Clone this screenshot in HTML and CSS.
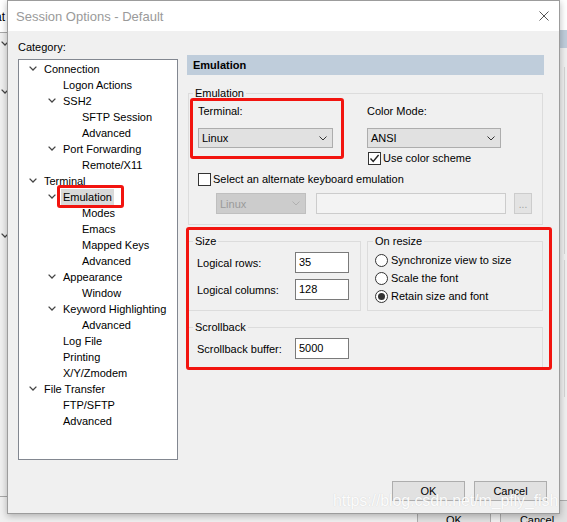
FILE: index.html
```html
<!DOCTYPE html>
<html>
<head>
<meta charset="utf-8">
<title>Session Options - Default</title>
<link rel="stylesheet" href="styles.css">
</head>
<body>
<div class="desk">
  <div class="bg-win">
    <div class="bg-title"><span class="bg-title-text">at</span></div>
    <div class="bg-band"></div>
    <svg class="bg-chev c1" viewBox="0 0 8 5"><path d="M0.6 0.6 L4 4 L7.4 0.6"/></svg>
    <svg class="bg-chev c2" viewBox="0 0 8 5"><path d="M0.6 0.6 L4 4 L7.4 0.6"/></svg>
    <svg class="bg-chev c3" viewBox="0 0 8 5"><path d="M0.6 0.6 L4 4 L7.4 0.6"/></svg>
    <div class="bg-vline v1"></div>
    <div class="bg-vline v2"></div>
    <div class="bg-hline"></div>
    <div class="bg-btn b1">OK</div>
    <div class="bg-btn b2">Cancel</div>
  </div>

  <div class="dialog">
    <div class="titlebar">
      <span class="title">Session Options - Default</span>
      <svg class="close" viewBox="0 0 10 10"><path d="M0.5 0.5 L9.5 9.5 M9.5 0.5 L0.5 9.5"/></svg>
    </div>
    <div class="dlg-body">
      <div class="main">
        <div class="cat">
          <div class="cat-label">Category:</div>
          <div class="tree">
            <div class="row l0"><span class="tw"><svg viewBox="0 0 8 5"><path d="M0.6 0.6 L4 4 L7.4 0.6"/></svg></span><span class="lbl">Connection</span></div>
            <div class="row l1"><span class="tw"></span><span class="lbl">Logon Actions</span></div>
            <div class="row l1"><span class="tw"><svg viewBox="0 0 8 5"><path d="M0.6 0.6 L4 4 L7.4 0.6"/></svg></span><span class="lbl">SSH2</span></div>
            <div class="row l2"><span class="tw"></span><span class="lbl">SFTP Session</span></div>
            <div class="row l2"><span class="tw"></span><span class="lbl">Advanced</span></div>
            <div class="row l1"><span class="tw"><svg viewBox="0 0 8 5"><path d="M0.6 0.6 L4 4 L7.4 0.6"/></svg></span><span class="lbl">Port Forwarding</span></div>
            <div class="row l2"><span class="tw"></span><span class="lbl">Remote/X11</span></div>
            <div class="row l0"><span class="tw"><svg viewBox="0 0 8 5"><path d="M0.6 0.6 L4 4 L7.4 0.6"/></svg></span><span class="lbl">Terminal</span></div>
            <div class="row l1"><span class="tw"><svg viewBox="0 0 8 5"><path d="M0.6 0.6 L4 4 L7.4 0.6"/></svg></span><span class="lbl sel">Emulation</span></div>
            <div class="row l2"><span class="tw"></span><span class="lbl">Modes</span></div>
            <div class="row l2"><span class="tw"></span><span class="lbl">Emacs</span></div>
            <div class="row l2"><span class="tw"></span><span class="lbl">Mapped Keys</span></div>
            <div class="row l2"><span class="tw"></span><span class="lbl">Advanced</span></div>
            <div class="row l1"><span class="tw"><svg viewBox="0 0 8 5"><path d="M0.6 0.6 L4 4 L7.4 0.6"/></svg></span><span class="lbl">Appearance</span></div>
            <div class="row l2"><span class="tw"></span><span class="lbl">Window</span></div>
            <div class="row l1"><span class="tw"><svg viewBox="0 0 8 5"><path d="M0.6 0.6 L4 4 L7.4 0.6"/></svg></span><span class="lbl">Keyword Highlighting</span></div>
            <div class="row l2"><span class="tw"></span><span class="lbl">Advanced</span></div>
            <div class="row l1"><span class="tw"></span><span class="lbl">Log File</span></div>
            <div class="row l1"><span class="tw"></span><span class="lbl">Printing</span></div>
            <div class="row l1"><span class="tw"></span><span class="lbl">X/Y/Zmodem</span></div>
            <div class="row l0"><span class="tw"><svg viewBox="0 0 8 5"><path d="M0.6 0.6 L4 4 L7.4 0.6"/></svg></span><span class="lbl">File Transfer</span></div>
            <div class="row l1"><span class="tw"></span><span class="lbl">FTP/SFTP</span></div>
            <div class="row l1"><span class="tw"></span><span class="lbl">Advanced</span></div>
          </div>
        </div>

        <div class="panel">
          <div class="phead">Emulation</div>

          <fieldset class="emu">
            <legend>Emulation</legend>
            <div class="emu-top">
              <div class="col term">
                <div class="flabel">Terminal:</div>
                <div class="select"><span>Linux</span><svg viewBox="0 0 8 5"><path d="M0.5 0.5 L4 4 L7.5 0.5"/></svg></div>
              </div>
              <div class="col cmode">
                <div class="flabel">Color Mode:</div>
                <div class="select"><span>ANSI</span><svg viewBox="0 0 8 5"><path d="M0.5 0.5 L4 4 L7.5 0.5"/></svg></div>
                <div class="check-row ucs"><span class="cbox"><svg viewBox="0 0 11 11"><path d="M1.5 5.5 L4.2 8.4 L9.6 2"/></svg></span><span>Use color scheme</span></div>
              </div>
            </div>
            <div class="check-row alt"><span class="cbox"></span><span>Select an alternate keyboard emulation</span></div>
            <div class="alt-row">
              <div class="select dis"><span>Linux</span><svg viewBox="0 0 8 5"><path d="M0.5 0.5 L4 4 L7.5 0.5"/></svg></div>
              <div class="tinput dis"></div>
              <div class="dots">...</div>
            </div>
          </fieldset>

          <div class="lower">
            <div class="lower-row">
              <fieldset class="size">
                <legend>Size</legend>
                <div class="frow"><span class="flab">Logical rows:</span><span class="num">35</span></div>
                <div class="frow"><span class="flab">Logical columns:</span><span class="num">128</span></div>
              </fieldset>
              <fieldset class="resize">
                <legend>On resize</legend>
                <div class="radio-row"><span class="rad"></span><span>Synchronize view to size</span></div>
                <div class="radio-row"><span class="rad"></span><span>Scale the font</span></div>
                <div class="radio-row"><span class="rad on"></span><span>Retain size and font</span></div>
              </fieldset>
            </div>
            <fieldset class="scroll">
              <legend>Scrollback</legend>
              <div class="frow"><span class="flab">Scrollback buffer:</span><span class="num">5000</span></div>
            </fieldset>
          </div>
        </div>
      </div>

      <div class="footer">
        <div class="btn">OK</div>
        <div class="btn">Cancel</div>
      </div>
    </div>
  </div>

  <div class="watermark">https://blog.csdn.net/m_pfly_fish</div>
</div>
</body>
</html>
```

FILE: styles.css
```css
* { box-sizing: border-box; }
html, body { margin: 0; padding: 0; }
body {
  width: 567px;
  height: 522px;
  overflow: hidden;
  font-family: "Liberation Sans", Arial, sans-serif;
  font-size: 11px;
  color: #000;
  background: #f0f0f0;
}
.desk { position: relative; width: 567px; height: 522px; overflow: hidden; background: #f0f0f0; }

/* background window (behind the dialog) */
.bg-win { position: absolute; inset: 0; background: #f0f0f0; }
.bg-title { height: 33px; background: #fff; border-bottom: 1px solid #a8a8a8; position: relative; overflow: hidden; }
.bg-title-text { position: absolute; left: -5px; top: 10px; font-size: 12px; line-height: 14px; }
.bg-band { position: absolute; left: 559px; top: 30px; width: 8px; height: 18px; background: #bfcddb; }
.bg-chev { position: absolute; left: 1px; width: 8px; height: 5px; fill: none; stroke: #444; stroke-width: 1.3; }
.bg-chev.c1 { top: 41px; }
.bg-chev.c2 { top: 89px; }
.bg-chev.c3 { top: 233px; }
.bg-vline { position: absolute; left: 564px; width: 1px; background: #d4d4d4; }
.bg-vline.v1 { top: 67px; height: 187px; }
.bg-vline.v2 { top: 260px; height: 137px; }
.bg-hline { position: absolute; left: 0; top: 496px; width: 8px; height: 1px; background: #a8a8a8; }
.bg-btn { position: absolute; top: 500px; height: 30px; background: #e1e1e1; border: 1px solid #adadad; text-align: center; padding-top: 12px; line-height: 14px; }
.bg-btn.b1 { left: 417px; width: 74px; }
.bg-btn.b2 { left: 500px; width: 74px; }

/* dialog */
.dialog {
  position: absolute;
  left: 7px;
  top: 0;
  width: 553px;
  height: 514px;
  background: #f0f0f0;
  border: 1px solid #9c9c9c;
  box-shadow: 0 2px 7px rgba(0, 0, 0, 0.28);
  display: flex;
  flex-direction: column;
}
.titlebar {
  height: 30px;
  flex: none;
  background: #fff;
  display: flex;
  align-items: center;
  justify-content: space-between;
  padding: 1px 10px 0 8px;
}
.title { font-size: 13px; color: #9a9a9a; line-height: 16px; }
.close { width: 10px; height: 10px; fill: none; stroke: #555; stroke-width: 1; margin-top: -2px; }

.dlg-body { flex: 1; display: flex; flex-direction: column; }
.main { display: flex; align-items: flex-start; gap: 9px; padding: 9px 0 0 10px; }

.cat { width: 160px; flex: none; display: flex; flex-direction: column; }
.cat-label { line-height: 14px; height: 14px; margin-bottom: 5px; }
.tree { height: 401px; background: #fff; border: 1px solid #828790; padding-top: 1px; }

.row { height: 16px; display: flex; align-items: center; white-space: nowrap; }
.l0 { padding-left: 10px; }
.l1 { padding-left: 29px; }
.l2 { padding-left: 48px; }
.tw { width: 15px; flex: none; display: flex; align-items: center; margin-top: -1px; }
.tw svg { width: 8px; height: 5px; fill: none; stroke: #444; stroke-width: 1.3; }
.lbl { line-height: 16px; padding: 0 2px; margin-left: -2px; }
.sel { background: #d9d9d9; position: relative; }
.sel::after {
  content: "";
  position: absolute;
  left: -4px;
  top: -4px;
  right: -10px;
  bottom: -3px;
  border: 3px solid #f2140f;
  border-radius: 3px;
}

/* right panel */
.panel { width: 357px; flex: none; margin-top: 15px; display: flex; flex-direction: column; }
.phead { height: 20px; background: #bfcddb; font-weight: bold; line-height: 20px; padding-left: 6px; }

fieldset { margin: 0; border: 1px solid #dcdcdc; padding: 0; min-width: 0; }
legend { padding: 0 2px; line-height: 14px; }

.emu { margin: 11px 1px 0; padding: 4px 0 10px 9px; }
.emu > legend { margin-left: -5px; }
.emu-top { display: flex; align-items: flex-start; gap: 34px; }
.col { display: flex; flex-direction: column; }
.col.term { width: 135px; position: relative; }
.col.term::after {
  content: "";
  position: absolute;
  left: -8px;
  top: -6px;
  right: -11px;
  bottom: -11px;
  border: 3px solid #f2140f;
  border-radius: 3px;
}
.col.cmode { width: 134px; }
.flabel { line-height: 14px; margin-bottom: 10px; }

.select {
  height: 20px;
  background: #e1e1e1;
  border: 1px solid #adadad;
  display: flex;
  align-items: center;
  justify-content: space-between;
  padding: 0 5px 0 3px;
}
.select svg { width: 8px; height: 5px; fill: none; stroke: #333; stroke-width: 1; }
.select.dis { width: 90px; height: 21px; background: #cccccc; border-color: #bfbfbf; color: #9a9a9a; }
.select.dis svg { stroke: #b0b0b0; }

.check-row { display: flex; align-items: center; gap: 2px; height: 13px; line-height: 13px; }
.cbox { width: 13px; height: 13px; border: 1px solid #333; background: #fff; flex: none; display: flex; align-items: center; justify-content: center; }
.cbox svg { width: 11px; height: 11px; fill: none; stroke: #222; stroke-width: 1.4; }
.ucs { margin-top: 4px; margin-left: 1px; }
.alt { margin-top: 8px; }

.alt-row { display: flex; align-items: center; margin-top: 7px; padding-left: 18px; }
.tinput.dis { width: 190px; height: 21px; margin-left: 10px; border: 1px solid #cccccc; background: #f3f3f3; }
.dots { width: 18px; height: 21px; margin-left: 8px; border: 1px solid #cccccc; background: #e3e3e3; color: #a0a0a0; text-align: center; line-height: 21px; font-size: 10px; }

.lower { position: relative; margin: 9px 1px 0; }
.lower::after {
  content: "";
  position: absolute;
  left: -2px;
  top: -7px;
  right: -9px;
  bottom: -2px;
  border: 3px solid #f2140f;
  border-radius: 3px;
}
.lower-row { display: flex; gap: 6px; }
.size { width: 173px; padding: 4px 0 10px 8px; }
.size > legend { margin-left: -4px; }
.resize { width: 176px; padding: 3px 0 5px 7px; }
.resize > legend { margin-left: -2px; }
.scroll { margin-top: 9px; padding: 4px 0 8px 8px; }
.scroll > legend { margin-left: -4px; }

.frow { display: flex; align-items: center; height: 21px; }
.frow + .frow { margin-top: 6px; }
.flab { width: 98px; flex: none; }
.num { width: 54px; height: 21px; background: #fff; border: 1px solid #7a7a7a; line-height: 19px; padding-left: 3px; }

.radio-row { display: flex; align-items: center; gap: 3px; height: 18px; }
.rad { width: 13px; height: 13px; border: 1px solid #333; border-radius: 50%; background: #fff; flex: none; position: relative; }
.rad.on::after { content: ""; position: absolute; left: 2px; top: 2px; width: 7px; height: 7px; border-radius: 50%; background: #333; }

.footer { display: flex; justify-content: flex-end; gap: 9px; margin-top: 21px; padding-right: 12px; }
.btn { width: 73px; height: 20px; background: #e1e1e1; border: 1px solid #adadad; text-align: center; line-height: 18px; }

.watermark {
  position: absolute;
  left: 333px;
  top: 492px;
  font-size: 16px;
  line-height: 18px;
  color: rgba(255, 255, 255, 0.95);
  text-shadow: 0 0 1px rgba(190, 190, 190, 0.7);
  white-space: nowrap;
  letter-spacing: -0.1px;
}
```
